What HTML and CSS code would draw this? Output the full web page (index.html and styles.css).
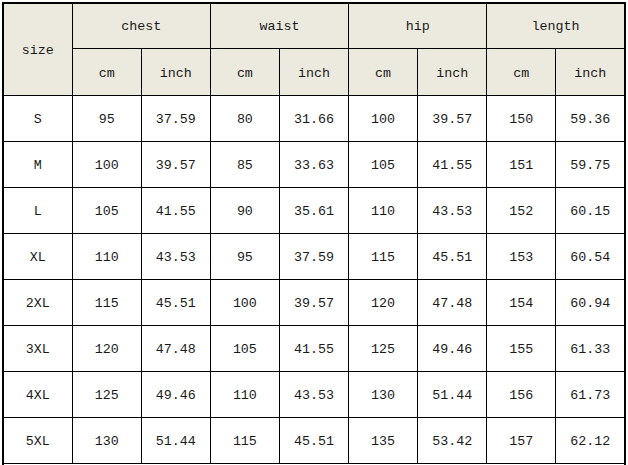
FILE: index.html
```html
<!DOCTYPE html>
<html>
<head>
<meta charset="utf-8">
<link rel="stylesheet" href="styles.css">
</head>
<body>
<table class="sizes">
  <colgroup>
    <col><col><col><col><col><col><col><col><col>
  </colgroup>
  <thead>
    <tr class="h1">
      <th rowspan="2" class="hd size">size</th>
      <th colspan="2" class="hd">chest</th>
      <th colspan="2" class="hd">waist</th>
      <th colspan="2" class="hd">hip</th>
      <th colspan="2" class="hd">length</th>
    </tr>
    <tr class="h2">
      <th class="hd">cm</th><th class="hd">inch</th>
      <th class="hd">cm</th><th class="hd">inch</th>
      <th class="hd">cm</th><th class="hd">inch</th>
      <th class="hd">cm</th><th class="hd">inch</th>
    </tr>
  </thead>
  <tbody>
    <tr><td>S</td><td>95</td><td>37.59</td><td>80</td><td>31.66</td><td>100</td><td>39.57</td><td>150</td><td>59.36</td></tr>
    <tr><td>M</td><td>100</td><td>39.57</td><td>85</td><td>33.63</td><td>105</td><td>41.55</td><td>151</td><td>59.75</td></tr>
    <tr><td>L</td><td>105</td><td>41.55</td><td>90</td><td>35.61</td><td>110</td><td>43.53</td><td>152</td><td>60.15</td></tr>
    <tr><td>XL</td><td>110</td><td>43.53</td><td>95</td><td>37.59</td><td>115</td><td>45.51</td><td>153</td><td>60.54</td></tr>
    <tr><td>2XL</td><td>115</td><td>45.51</td><td>100</td><td>39.57</td><td>120</td><td>47.48</td><td>154</td><td>60.94</td></tr>
    <tr><td>3XL</td><td>120</td><td>47.48</td><td>105</td><td>41.55</td><td>125</td><td>49.46</td><td>155</td><td>61.33</td></tr>
    <tr><td>4XL</td><td>125</td><td>49.46</td><td>110</td><td>43.53</td><td>130</td><td>51.44</td><td>156</td><td>61.73</td></tr>
    <tr><td>5XL</td><td>130</td><td>51.44</td><td>115</td><td>45.51</td><td>135</td><td>53.42</td><td>157</td><td>62.12</td></tr>
    <tr class="tail"><td colspan="9"></td></tr>
  </tbody>
</table>
</body>
</html>
```
FILE: styles.css
```css
html {
  overflow: hidden;
  background: #fff;
}
body {
  margin: 0;
  padding: 2px 0 0 2px;
}
.sizes {
  border-collapse: collapse;
  table-layout: fixed;
  width: 624px;
  font-family: "Liberation Mono", "DejaVu Sans Mono", monospace;
  font-size: 13.33px;
  color: #1a1a1a;
  border: 2px solid #000;
}
.sizes th,
.sizes td {
  border: 1px solid #000;
  text-align: center;
  vertical-align: middle;
  padding: 0;
  font-weight: normal;
}
.sizes .hd {
  background: #ECEADF;
}
.sizes .h1 th {
  height: 44px;
}
.sizes .h1 .size {
  padding-top: 2px;
}
.sizes .h2 th {
  height: 44px;
  padding-top: 2px;
}
.sizes tbody td {
  height: 43px;
  padding-top: 2px;
}
.sizes .tail td {
  height: 30px;
  padding: 0;
  border-bottom: none;
}
```
